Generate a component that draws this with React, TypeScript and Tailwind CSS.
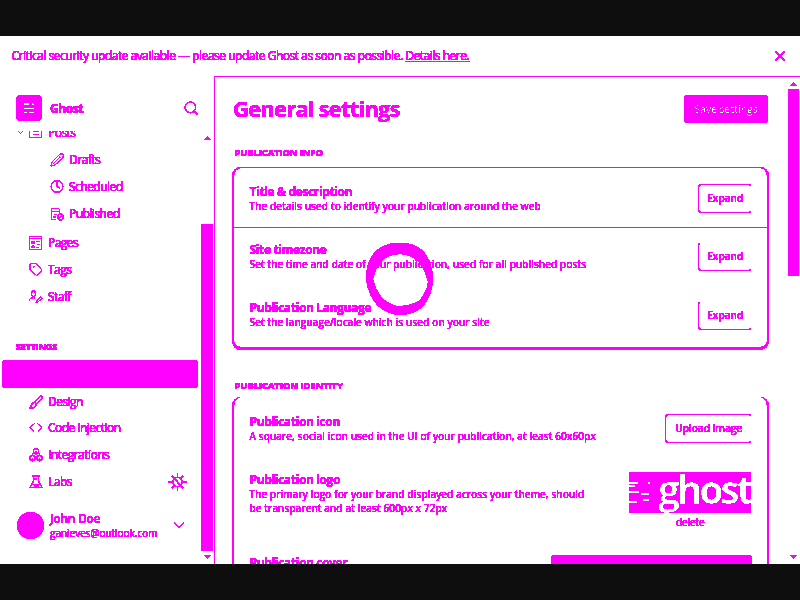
import type { ReactNode } from "react";
import { Search, X, ChevronDown, Clock, Tag, Code } from "lucide-react";

function Arrow({ down = false }: { down?: boolean }) {
  return (
    <svg width="7" height="4" viewBox="0 0 7 4" className="block shrink-0" fill="#f0f" shapeRendering="crispEdges">
      <path d={down ? "M0 0H7L4 4H3Z" : "M3 0H4L7 4H0Z"} />
    </svg>
  );
}

function Expand({ className = "border-t-[#f0f]" }: { className?: string }) {
  return (
    <button className={"flex h-[29px] w-[54px] shrink-0 items-center justify-center rounded-[4px] border border-b-[#f0f] border-l-[#f0f] border-r-white pt-px text-[10.5px] font-semibold tracking-[-0.25px] " + className}>
      Expand
    </button>
  );
}

function Row({ title, children, action, className }: { title: string; children: ReactNode; action?: ReactNode; className: string }) {
  return (
    <div className={"flex justify-between pl-[15.5px] pr-[15px] " + className}>
      <div>
        <h3 className="text-[12px] font-bold leading-4 tracking-[-0.36px]">{title}</h3>
        <p className="whitespace-nowrap text-[10px] leading-[13.5px] tracking-[0.18px] [-webkit-text-stroke:0.2px_#f0f]">{children}</p>
      </div>
      {action}
    </div>
  );
}

function NavItem({ icon, label, sub = false }: { icon: ReactNode; label: string; sub?: boolean }) {
  return (
    <div className={"flex h-[27px] items-center gap-[5px] whitespace-nowrap text-[12px] tracking-[-0.52px] [-webkit-text-stroke:0.2px_#f0f] " + (sub ? "pl-[50px]" : "pl-[29px]")}>
      <span className="flex w-[14px] shrink-0 justify-center">{icon}</span>
      <span>{label}</span>
    </div>
  );
}

const stroke = { fill: "none", stroke: "#f0f", strokeWidth: 1 };

export default function App() {
  return (
    <div className="h-[600px] w-[800px] overflow-hidden bg-[#0e0e0e] py-9 font-['Open_Sans','Noto_Sans',sans-serif]">
      <svg width="0" height="0" className="absolute">
        <filter id="ink" x="0" y="0" width="100%" height="100%" colorInterpolationFilters="sRGB">
          <feComponentTransfer>
            <feFuncR type="discrete" tableValues="1 1" />
            <feFuncG type="discrete" tableValues="0 0 0 0 0 0 0 0 0 0 0 0 0 0 0 0 0 1 1 1" />
            <feFuncB type="discrete" tableValues="1 1" />
          </feComponentTransfer>
        </filter>
      </svg>
      <div className="relative flex h-[528px] flex-col overflow-hidden bg-white text-[#f0f] [filter:url(#ink)]">
        <div className="flex h-10 shrink-0 items-center justify-between pl-[11.5px] pr-[12px] text-[12px] tracking-[-0.48px] [-webkit-text-stroke:0.2px_#f0f]">
          <p className="whitespace-nowrap">
            Critical security update available — please update Ghost as soon as possible. <a className="underline">Details here.</a>
          </p>
          <X size={16} strokeWidth={1.55} />
        </div>

        <div className="flex min-h-0 flex-1">
          <aside className="flex w-[214px] shrink-0">
            <div className="flex w-[201px] flex-col">
              <header className="flex h-[55px] shrink-0 items-center pl-4 pr-[2px] pt-[9px]">
                <svg width="26" height="26" viewBox="0 0 26 26" shapeRendering="crispEdges">
                  <rect width="26" height="26" rx="4" fill="#f0f" />
                  <path d="M8 8.500h5M16 8.500h1M8 9.500h5M16 9.500h2M8 13.500h10M8 17.500h3M13 17.500h5" stroke="white" />
                </svg>
                <span className="ml-2 mt-[2px] text-[12px] font-bold tracking-[-0.4px] [-webkit-text-stroke:0.2px_#f0f]">Ghost</span>
                <Search size={16} strokeWidth={1.55} className="ml-auto" />
              </header>
              <nav className="flex h-[377px] shrink-0 flex-col overflow-hidden">
                <div className="-mt-[12px] flex h-[27px] shrink-0 items-center pl-[17px] text-[12px] tracking-[-0.52px] [-webkit-text-stroke:0.2px_#f0f]">
                  <ChevronDown size={7} />
                  <svg width="13" height="14" viewBox="0 0 13 14" {...stroke} className="ml-[5px] mr-[6px]">
                    <path d="M.5 1.500h12v10H.5zM4 8.500h6M4 5h6" />
                  </svg>
                  Posts
                </div>
                <NavItem sub label="Drafts" icon={
                  <svg width="14" height="14" viewBox="0 0 14 14" {...stroke}>
                    <path d="M1 13l1-4L9.500 1.500q2-1 3.500 0t-.5 3.500L5 12zM8.500 2.500l3 3M4 10l6-6M2 9l3 3" />
                  </svg>} />
                <NavItem sub label="Scheduled" icon={<Clock size={15} strokeWidth={1.650} />} />
                <NavItem sub label="Published" icon={
                  <svg width="14" height="14" viewBox="0 0 14 14" {...stroke}>
                    <path d="M6 12.500H1.500V1.500h7l1 1v3M1 4.500h8M4 7.500h3M3 10h3M7.500 10a3 3 0 1 0 6 0 3 3 0 1 0-6 0M8.500 12l4-4" />
                  </svg>} />
                <div className="mt-[2px]">
                  <NavItem label="Pages" icon={
                    <svg width="14" height="14" viewBox="0 0 14 14" {...stroke}>
                      <path d="M.5.5h12v13H.5zM1 2.500h12M3 5.500h2v2H3zM3 10h2v1.500H3zM7 5.500h4M8 8.500h3M7 11.500h3" />
                    </svg>} />
                  <NavItem label="Tags" icon={<Tag size={15} strokeWidth={1.550} />} />
                  <NavItem label="Staff" icon={
                    <svg width="14" height="14" viewBox="0 0 14 14" {...stroke}>
                      <path d="M2.500 3a2 2 0 1 1 4 0v1.500a2 2 0 1 1-4 0zM.5 10.500V9.500Q2 7.500 4.500 7.500L6 8M7 12.500l1-2.500L11.500 7l1.500 1.500L9.500 11.500z" />
                    </svg>} />
                </div>
                <h4 className="mt-[31px] pl-4 text-[9px] font-bold leading-[12px] tracking-[-0.150px] [-webkit-text-stroke:0.2px_#f0f]">SETTINGS</h4>
                <div className="ml-[2px] mt-[7px] h-7 w-[196px] shrink-0 rounded-[4px] bg-[#f0f]" />
                <NavItem label="Design" icon={
                  <svg width="14" height="14" viewBox="0 0 14 14" {...stroke}>
                    <path d="M5.500 7.500L10 2q2-2 3-1t-.5 3L7.500 9zM5.500 7.500Q3 7.500 2.500 10T.5 13Q6 14 7.500 9" />
                  </svg>} />
                <div className="-mt-px">
                  <NavItem label="Code injection" icon={<Code size={15} strokeWidth={1.550} />} />
                  <NavItem label="Integrations" icon={
                    <svg width="14" height="14" viewBox="0 0 14 14" {...stroke}>
                      <path d="M4.500 1.800 7 .6l2.500 1.200v3L7 6 4.500 4.800zM7 3v3M1 8.500l2.500-1.200L6 8.500v3l-2.500 1.200L1 11.500zM8 8.500l2.500-1.200L13 8.500v3l-2.500 1.200L8 11.500zM3.500 10v2M10.500 10v2M4.500 5 2.500 8M9.500 5 11.500 8" />
                    </svg>} />
                  <div className="flex items-center justify-between pr-[14px]">
                    <NavItem label="Labs" icon={
                      <svg width="14" height="14" viewBox="0 0 14 14" {...stroke}>
                        <path d="M3 1h8M4.500 1v5L1 12.500h12L9.500 6V1M3 9.500h8M4.500 4h3M5.500 11h4" />
                      </svg>} />
                    <svg width="19" height="18" viewBox="0 0 19 18" {...stroke} strokeWidth={1.200}>
                      <circle cx="9.500" cy="9" r="4.500" />
                      <path d="M9.500 0v4M9.500 14v4M0 9h5M14 9h5M4 3l2.500 3M12.500 12l2.500 3M4 15l2.500-3M12.500 6L15 3M7 6l5 6" />
                    </svg>
                  </div>
                </div>
              </nav>
              <footer className="flex h-[34px] items-center pl-[17px] pr-4">
                <span className="h-[27px] w-[27px] shrink-0 rounded-full bg-[#f0f]" />
                <div className="ml-[6px] whitespace-nowrap">
                  <div className="text-[12px] font-semibold leading-[15px] tracking-[-0.250px]">John Doe</div>
                  <div className="text-[10px] leading-[14px] tracking-[-0.020px] [-webkit-text-stroke:0.2px_#f0f]">ganieves@outlook.com</div>
                </div>
                <ChevronDown size={18} strokeWidth={1.300} className="-mr-[3px] ml-auto shrink-0" />
              </footer>
            </div>
            <div className="flex w-3 flex-col items-center pt-[60px]">
              <Arrow />
              <div className="mt-[84px] h-[327px] w-3 rounded-t-[2px] bg-[#f0f]" />
              <div className="mt-1"><Arrow down /></div>
            </div>
          </aside>

          <main className="flex min-w-0 flex-1 border-l border-t border-[#f0f]">
            <div className="w-[554px] shrink-0 overflow-hidden pl-[17px]">
              <header className="flex h-[64px] items-center justify-between pl-px pr-px">
                <h1 className="-mt-[2px] text-[22px] font-bold leading-8 tracking-[-0.8px]">General settings</h1>
                <button className="h-7 w-[84px] rounded-[4px] bg-[#f0f] pt-[2px] text-[10.500px] font-semibold tracking-[-0.250px] text-white">Save settings</button>
              </header>
              <h2 className="mt-[5px] pl-[2.500px] text-[9.500px] font-bold leading-[14px] tracking-[-0.150px] [-webkit-text-stroke:0.2px_#f0f]">PUBLICATION INFO</h2>
              <section className="mt-[7px] h-[183px] rounded-[9px] border-x-2 border-b-[3px] border-t border-[#f0f]">
                <Row title="Title & description" action={<Expand />} className="h-[60px] border-b border-[#f0f] pt-4">
                  The details used to identify your publication around the web
                </Row>
                <Row title="Site timezone" action={<Expand className="border-t-white" />} className="h-[58px] pt-[14px]">
                  Set the time and date of your publication, used for all published posts
                </Row>
                <Row title="Publication Language" action={<Expand className="mt-px border-t-white" />} className="h-[59px] pt-[14px]">
                  Set the language/locale which is used on your site
                </Row>
              </section>
              <h2 className="mt-[29px] pl-[2.500px] text-[9.500px] font-bold leading-[14px] tracking-[-0.100px] [-webkit-text-stroke:0.2px_#f0f]">PUBLICATION IDENTITY</h2>
              <section className="mt-1 h-[200px] rounded-t-[9px] border-x-2 border-[#f0f]">
                <Row title="Publication icon" className="h-[58px] pt-[17px]" action={
                  <button className="h-[29px] w-[87px] shrink-0 rounded-[4px] border border-[#f0f] border-r-white pt-px text-[10.500px] font-semibold tracking-[-0.250px]">Upload Image</button>}>
                  A square, social icon used in the UI of your publication, at least 60x60px
                </Row>
                <Row title="Publication logo" className="h-[83px] pt-[17px]" action={
                  <div className="flex w-[123px] shrink-0 flex-col items-start">
                    <div className="flex h-[41px] w-[122px] items-center overflow-hidden bg-[#f0f] text-white">
                      <svg width="21" height="41" viewBox="0 0 21 41" className="shrink-0" stroke="white" strokeWidth="2" shapeRendering="crispEdges">
                        <path d="M0 11h9M0 14h6M19 11h2M0 20h10M12 22h8M0 30h8M14 28h6" />
                      </svg>
                      <span className="-mt-[8px] ml-[8px] text-[39px] font-bold leading-[41px] tracking-[-3.200px]">ghost</span>
                    </div>
                    <span className="ml-[47px] mt-[2px] text-[10px] leading-[14px] tracking-[-0.100px] [-webkit-text-stroke:0.2px_#f0f]">delete</span>
                  </div>}>
                  The primary logo for your brand displayed across your theme, should<br />be transparent and at least 600px x 72px
                </Row>
                <Row title="Publication cover" className="pt-[17px]" action={<div className="h-7 w-[201px] rounded-t-[3px] bg-[#f0f]" />}>{""}</Row>
              </section>
            </div>
            <div className="ml-[18px] flex w-3 flex-col items-center pt-[5px]">
              <Arrow />
              <div className="mt-[3px] h-[187px] w-[11px] shrink-0 bg-[#f0f]" />
              <div className="mt-[279px]"><Arrow down /></div>
            </div>
          </main>
        </div>

        <svg width="70" height="74" viewBox="365 242 70 74" className="absolute left-[365px] top-[206px]">
          <path fill="#f0f" fillRule="evenodd" d="M366 279Q367 243 400 243Q425 243 431 266Q434 276 432 287Q426 315 399 315Q371 312 366 279ZM373 279Q378 254 400 254Q422 255 428 282Q427 292 419 301Q408 307 396 306Q378 301 373 279Z" />
        </svg>
      </div>
    </div>
  );
}
